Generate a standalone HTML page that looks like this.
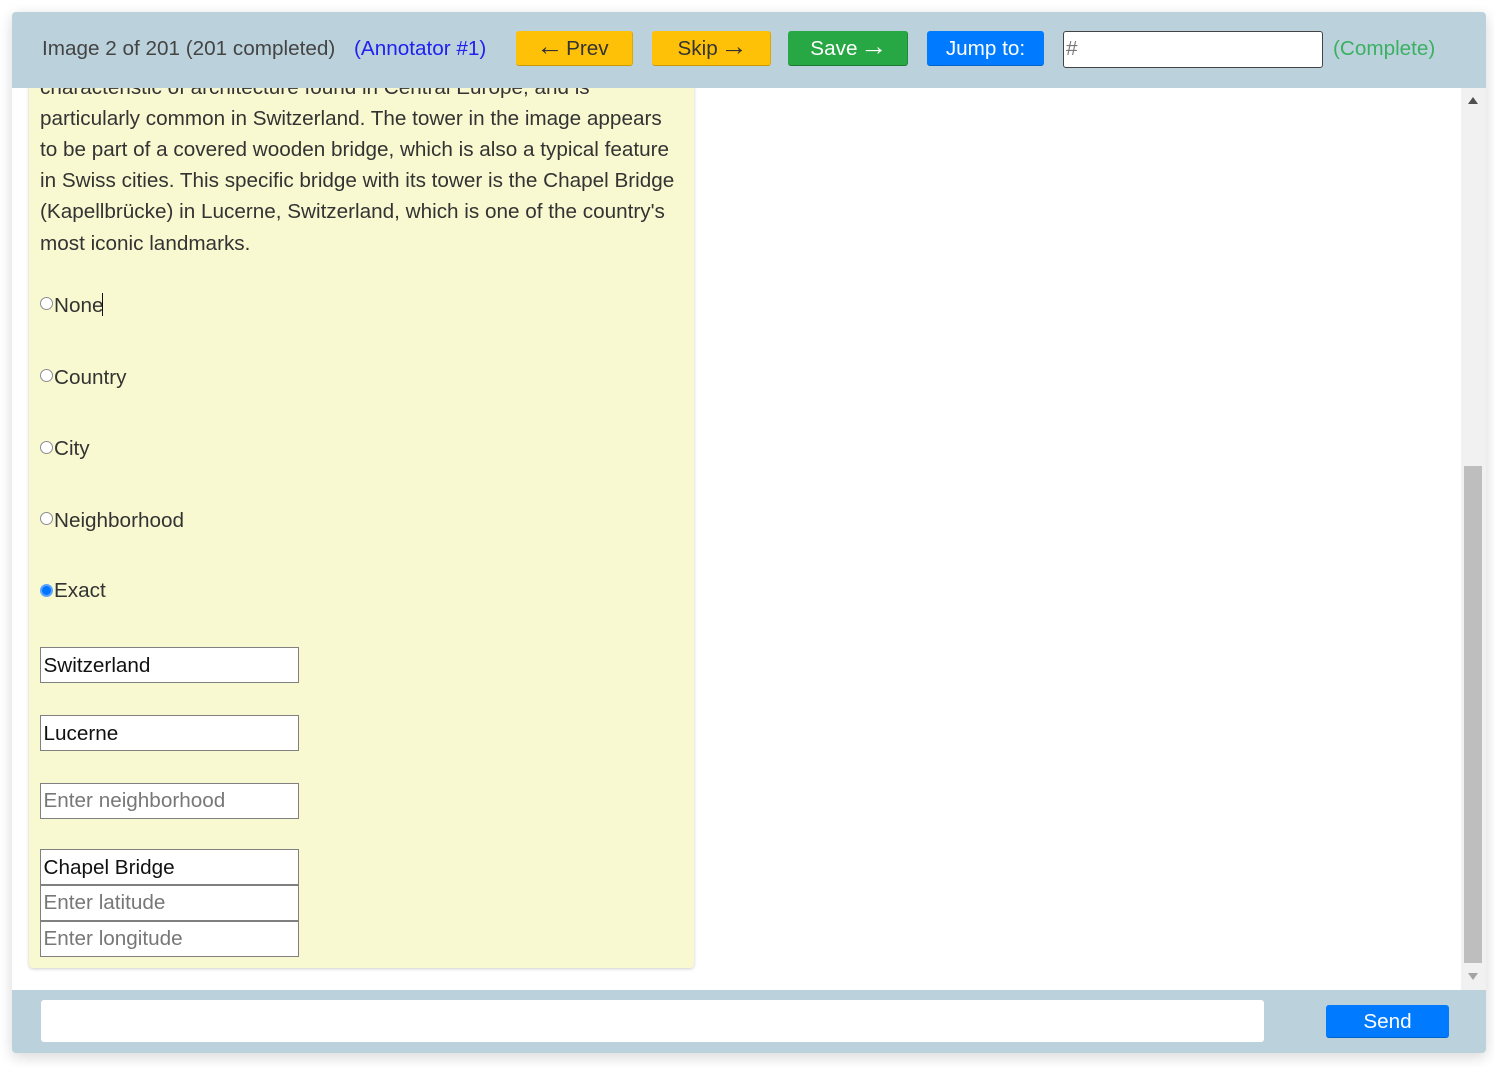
<!DOCTYPE html>
<html lang="en">
<head>
<meta charset="utf-8">
<title>Annotator</title>
<style>
html,body{margin:0;padding:0;background:#fff;width:1494px;height:1067px;overflow:hidden}
body{font-family:"Liberation Sans",Arial,sans-serif;font-size:20.7px;color:#333;position:relative}
#wrap{position:absolute;left:0;top:0;width:1494px;height:1067px;filter:blur(.3px)}
.a{position:absolute;white-space:nowrap}
#card{left:12px;top:12px;width:1474px;height:1041px;background:#fff;border-radius:4px;box-shadow:0 4px 14px rgba(0,0,0,.16)}
#top{left:12px;top:12px;width:1474px;height:75.5px;background:#bbd2dc;border-radius:4px 4px 0 0}
#bot{left:12px;top:990px;width:1474px;height:63px;background:#bbd2dc;border-radius:0 0 4px 4px}
#panel{left:29px;top:60px;width:665px;height:908px;background:#f9f9d1;border-radius:4px;box-shadow:0 1px 3px rgba(0,0,0,.2)}
.t{left:40px;color:#333;line-height:31px}
.btn{height:35px;line-height:35px;text-align:center;border-radius:3px;box-sizing:border-box;top:31px}
.ar{font-size:27px;line-height:0;margin:0 -3px}
.y{background:#ffc107;color:#333;border-bottom:1px solid #c99a08;border-right:1px solid #d8a808}
.inp{left:40px;width:259px;height:36px;box-sizing:border-box;border:1px solid #808080;background:#fff;line-height:35px;padding-left:2.5px;color:#111}
.ph{color:#777}
.r{left:40px;width:13px;height:13px;box-sizing:border-box;border:1.5px solid #8d8d8d;border-radius:50%;background:#fff}
.l{left:54px;color:#333}
</style>
</head>
<body>
<div id="wrap">
<div class="a" id="card"></div>
<div class="a" id="panel"></div>

<div class="a t" style="top:72px">characteristic of architecture found in Central Europe, and is</div>
<div class="a t" style="top:103px">particularly common in Switzerland. The tower in the image appears</div>
<div class="a t" style="top:134px">to be part of a covered wooden bridge, which is also a typical feature</div>
<div class="a t" style="top:165px">in Swiss cities. This specific bridge with its tower is the Chapel Bridge</div>
<div class="a t" style="top:196px">(Kapellbrücke) in Lucerne, Switzerland, which is one of the country's</div>
<div class="a t" style="top:228px">most iconic landmarks.</div>

<div class="a r" style="top:297px"></div><div class="a l" style="top:294px">None</div>
<div class="a" style="left:102px;top:293px;width:1px;height:23px;background:#111"></div>
<div class="a r" style="top:369px"></div><div class="a l" style="top:366px">Country</div>
<div class="a r" style="top:441px"></div><div class="a l" style="top:437px">City</div>
<div class="a r" style="top:512px"></div><div class="a l" style="top:509px">Neighborhood</div>
<div class="a" style="left:40px;top:584px;width:13px;height:13px;box-sizing:border-box;border-radius:50%;background:#0075ff;border:2px solid #5aa4ff"></div>
<div class="a l" style="top:579px">Exact</div>

<div class="a inp" style="top:647px">Switzerland</div>
<div class="a inp" style="top:715px">Lucerne</div>
<div class="a inp ph" style="top:782.5px;line-height:33px">Enter neighborhood</div>
<div class="a inp" style="top:849px">Chapel Bridge</div>
<div class="a inp ph" style="top:885px;line-height:33px">Enter latitude</div>
<div class="a inp ph" style="top:921px;line-height:33px">Enter longitude</div>

<div class="a" style="left:1461px;top:87px;width:25px;height:903px;background:#f1f1f1"></div>
<div class="a" style="left:1464px;top:466px;width:18px;height:497px;background:#bebebe"></div>
<div class="a" style="left:1468px;top:97px;width:0;height:0;border-left:5px solid transparent;border-right:5px solid transparent;border-bottom:7px solid #505050"></div>
<div class="a" style="left:1468px;top:973px;width:0;height:0;border-left:5px solid transparent;border-right:5px solid transparent;border-top:7px solid #a3a3a3"></div>

<div class="a" id="top"></div>
<div class="a" style="left:42px;top:37px;color:#444">Image 2 of 201 (201 completed)</div>
<div class="a" style="left:354px;top:37px;color:#2020f0">(Annotator #1)</div>
<div class="a btn y" style="left:516px;width:117px"><span class="ar">←</span> Prev</div>
<div class="a btn y" style="left:652px;width:119px">Skip <span class="ar">→</span></div>
<div class="a btn" style="left:788px;width:119.5px;background:#28a745;color:#fff;border-bottom:1px solid #1c7a33;border-right:1px solid #1f8a3a">Save <span class="ar">→</span></div>
<div class="a btn" style="left:927px;width:117px;background:#007bff;color:#fff;border-bottom:1px solid #0062cc">Jump to:</div>
<div class="a" style="left:1063px;top:31px;width:260px;height:37px;box-sizing:border-box;background:#fff;border:1.5px solid #444;border-radius:3px;color:#777;line-height:33px;padding-left:2px">#</div>
<div class="a" style="left:1333px;top:37px;color:#3cb062">(Complete)</div>

<div class="a" id="bot"></div>
<div class="a" style="left:41px;top:1000px;width:1223px;height:42px;background:#fff;border-radius:3px"></div>
<div class="a" style="left:1326px;top:1005px;width:123px;height:33px;line-height:33px;box-sizing:border-box;background:#007bff;color:#fff;text-align:center;border-radius:3px;border-bottom:1px solid #0062cc">Send</div>
</div>
</body>
</html>
